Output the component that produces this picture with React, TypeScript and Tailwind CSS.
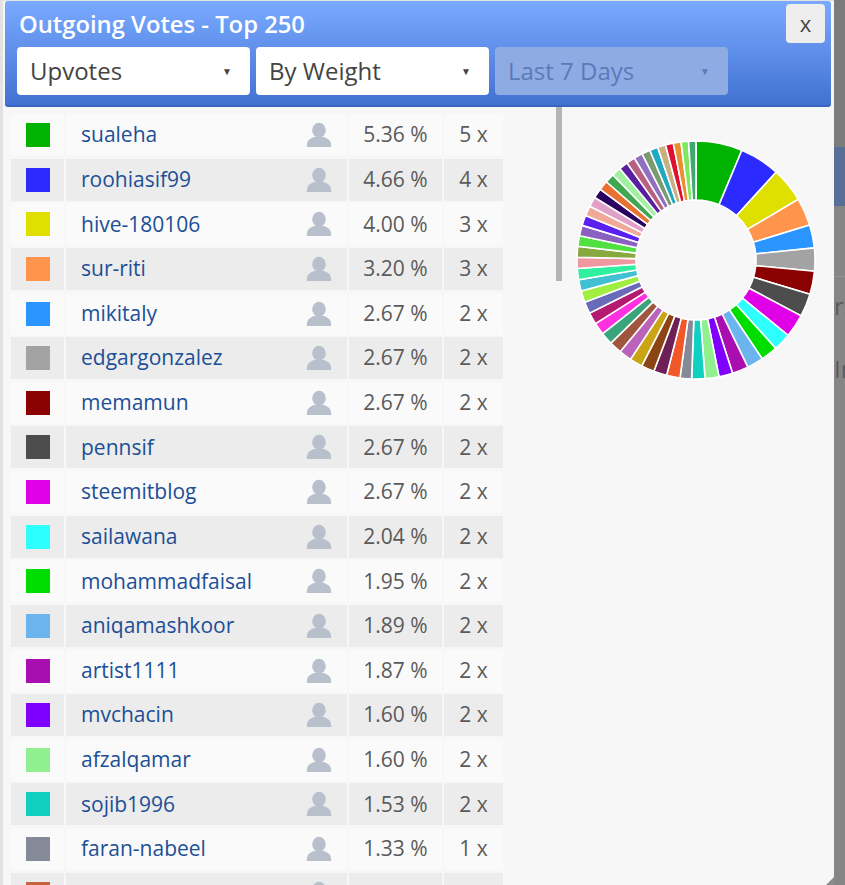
const rows = [
  { name: "sualeha", color: "#00b300", pct: "5.36", n: 5 },
  { name: "roohiasif99", color: "#2b2bff", pct: "4.66", n: 4 },
  { name: "hive-180106", color: "#dfdf00", pct: "4.00", n: 3 },
  { name: "sur-riti", color: "#ff944d", pct: "3.20", n: 3 },
  { name: "mikitaly", color: "#2a94ff", pct: "2.67", n: 2 },
  { name: "edgargonzalez", color: "#a3a3a3", pct: "2.67", n: 2 },
  { name: "memamun", color: "#8b0000", pct: "2.67", n: 2 },
  { name: "pennsif", color: "#4d4d4d", pct: "2.67", n: 2 },
  { name: "steemitblog", color: "#e000e8", pct: "2.67", n: 2 },
  { name: "sailawana", color: "#2dffff", pct: "2.04", n: 2 },
  { name: "mohammadfaisal", color: "#00dd00", pct: "1.95", n: 2 },
  { name: "aniqamashkoor", color: "#6cb4ee", pct: "1.89", n: 2 },
  { name: "artist1111", color: "#a90eb0", pct: "1.87", n: 2 },
  { name: "mvchacin", color: "#7f00ff", pct: "1.60", n: 2 },
  { name: "afzalqamar", color: "#90f090", pct: "1.60", n: 2 },
  { name: "sojib1996", color: "#10d0c0", pct: "1.53", n: 2 },
  { name: "faran-nabeel", color: "#858a99", pct: "1.33", n: 1 },
  { name: "", color: "#c8623f", pct: "", n: 0 },
];

// slices past the listed rows, clockwise from the bottom
const restColors = [
  "#f0582a", "#6e1f55", "#8a4513", "#c9a415", "#bb62bb", "#a0553f", "#3aa57a", "#ff30e0", "#b31a70",
  "#6a6abb", "#a0ee40", "#40c0d0", "#30f0a0", "#f098a0", "#88a840", "#50e040", "#8a60c0", "#5a20f0",
  "#f0a898", "#e0a0c8", "#2a0060", "#e87030", "#40a850", "#a0f0a0", "#5a1fa0", "#b86080", "#9070c0",
  "#7a9a70", "#20a8c0", "#c8b080", "#e01030", "#e89030", "#80e860", "#40a870",
];

function buildSlices() {
  const listed = rows.slice(0, 17).map((r) => ({ color: r.color, deg: parseFloat(r.pct) * 4.23 }));
  const used = listed.reduce((a, s) => a + s.deg, 0);
  const weights = restColors.map((_, i) => 6.6 - (i / (restColors.length - 1)) * 3);
  const sum = weights.reduce((a, b) => a + b, 0);
  const rest = restColors.map((color, i) => ({ color, deg: (weights[i] / sum) * (360 - used) }));
  return [...listed, ...rest];
}

function arc(start: number, end: number, R: number, r: number, c: number) {
  const p = (deg: number, rad: number) => {
    const a = (deg * Math.PI) / 180;
    return `${(c + rad * Math.sin(a)).toFixed(2)} ${(c - rad * Math.cos(a)).toFixed(2)}`;
  };
  return `M${p(start, R)} A${R} ${R} 0 0 1 ${p(end, R)} L${p(end, r)} A${r} ${r} 0 0 0 ${p(start, r)} Z`;
}

function Donut() {
  let at = 0;
  return (
    <svg width="242" height="242" viewBox="0 0 242 242">
      {buildSlices().map((s, i) => {
        const d = arc(at, at + s.deg, 119, 60, 121);
        at += s.deg;
        return <path key={i} d={d} fill={s.color} stroke="#ffffff" strokeWidth="1.6" />;
      })}
    </svg>
  );
}

function UserIcon() {
  return (
    <svg width="26" height="26" viewBox="0 0 26 26" className="shrink-0">
      <ellipse cx="13" cy="8.2" rx="6.8" ry="7.4" fill="#b8c1cb" />
      <path d="M0.8 25 C0.8 19 2.6 17.2 8 15 L18 15 C23.4 17.2 25.2 19 25.2 25 Z" fill="#b8c1cb" />
    </svg>
  );
}

function Select({ label, disabled }: { label: string; disabled?: boolean }) {
  return (
    <div
      className={
        disabled
          ? "flex h-[48px] w-[233px] items-center justify-between rounded-[4px] bg-[#8fabe3] pl-[13px] pr-[18px] text-[#5b7ab9]"
          : "flex h-[48px] w-[233px] items-center justify-between rounded-[4px] bg-white pl-[13px] pr-[18px] text-[#444444]"
      }
    >
      <span className="text-[24px]">{label}</span>
      <span className="text-[10px]">▼</span>
    </div>
  );
}

function Row({ row, odd }: { row: (typeof rows)[number]; odd: boolean }) {
  const cell = odd ? "bg-[#ececec]" : "bg-[#fafafa]";
  return (
    <div className="flex h-[42px] shrink-0 gap-[2px] text-[21px] text-[#5a5a5a]">
      <div className={`flex w-[53px] shrink-0 items-center justify-center ${cell}`}>
        <div className="h-[24px] w-[24px]" style={{ backgroundColor: row.color }} />
      </div>
      <div className={`flex w-[281px] shrink-0 items-center justify-between pl-[15px] pr-[15px] ${cell}`}>
        <span className="text-[#1c4f96]">{row.name}</span>
        <UserIcon />
      </div>
      <div className={`flex w-[93px] shrink-0 items-center justify-center ${cell}`}>{row.pct && `${row.pct} %`}</div>
      <div className={`flex w-[59px] shrink-0 items-center justify-center ${cell}`}>{row.n > 0 && `${row.n} x`}</div>
    </div>
  );
}

export default function App() {
  return (
    <div className="relative h-[885px] w-[845px] overflow-hidden bg-[#868686] font-['Open_Sans',sans-serif]">
      {/* page behind the dialog */}
      <div className="flex h-full flex-col items-start pl-[834px] text-[24px] leading-[30px] text-[#5c5c5c]">
        <div className="h-[147px] w-full bg-[#7c7c7c]" />
        <div className="h-[59px] w-full bg-[#586f98]" />
        <div className="mt-[70px] h-px w-full bg-[#949494]" />
        <div className="mt-[14px]">rs</div>
        <div className="mt-[33px]">In</div>
      </div>

      <div className="absolute left-0 top-0 h-[885px] w-[834px] border-l-[3px] border-t border-[#e2e2e2] bg-[#f7f7f7]">
        <div className="ml-[2px] mr-[3px] h-[106px] rounded-[3px] border-b-2 border-[#3a66c0] bg-gradient-to-b from-[#7aaaff] to-[#4272d2] pl-[12px] pt-[8px]">
          <div className="flex h-[38px] items-start justify-between pr-[6px]">
            <h1 className="ml-[2px] text-[23.8px] font-semibold leading-[30px] text-white">Outgoing Votes - Top 250</h1>
            <button className="-mt-[5px] flex h-[39px] w-[39px] items-center justify-center rounded-[4px] bg-[#eeeeee] text-[22px] text-[#444444]">
              x
            </button>
          </div>
          <div className="flex gap-[6px]">
            <Select label="Upvotes" />
            <Select label="By Weight" />
            <Select label="Last 7 Days" disabled />
          </div>
        </div>

        <div className="flex items-start">
          <div className="ml-[8px] mt-[7px] flex w-[491px] shrink-0 flex-col gap-[2.63px]">
            {rows.map((r, i) => (
              <Row key={i} row={r} odd={i % 2 === 1} />
            ))}
          </div>
          <div className="ml-[54px] h-[174px] w-[6px] shrink-0 bg-[#b4b4b4]" />
          <div className="ml-[13px] mt-[32px] shrink-0">
            <Donut />
          </div>
        </div>

        {/* resize grip */}
        <svg width="8" height="8" viewBox="0 0 8 8" className="absolute bottom-0 right-0">
          <path d="M8 0 L8 8 L0 8 Z" fill="#8c8c8c" />
        </svg>
      </div>
    </div>
  );
}
